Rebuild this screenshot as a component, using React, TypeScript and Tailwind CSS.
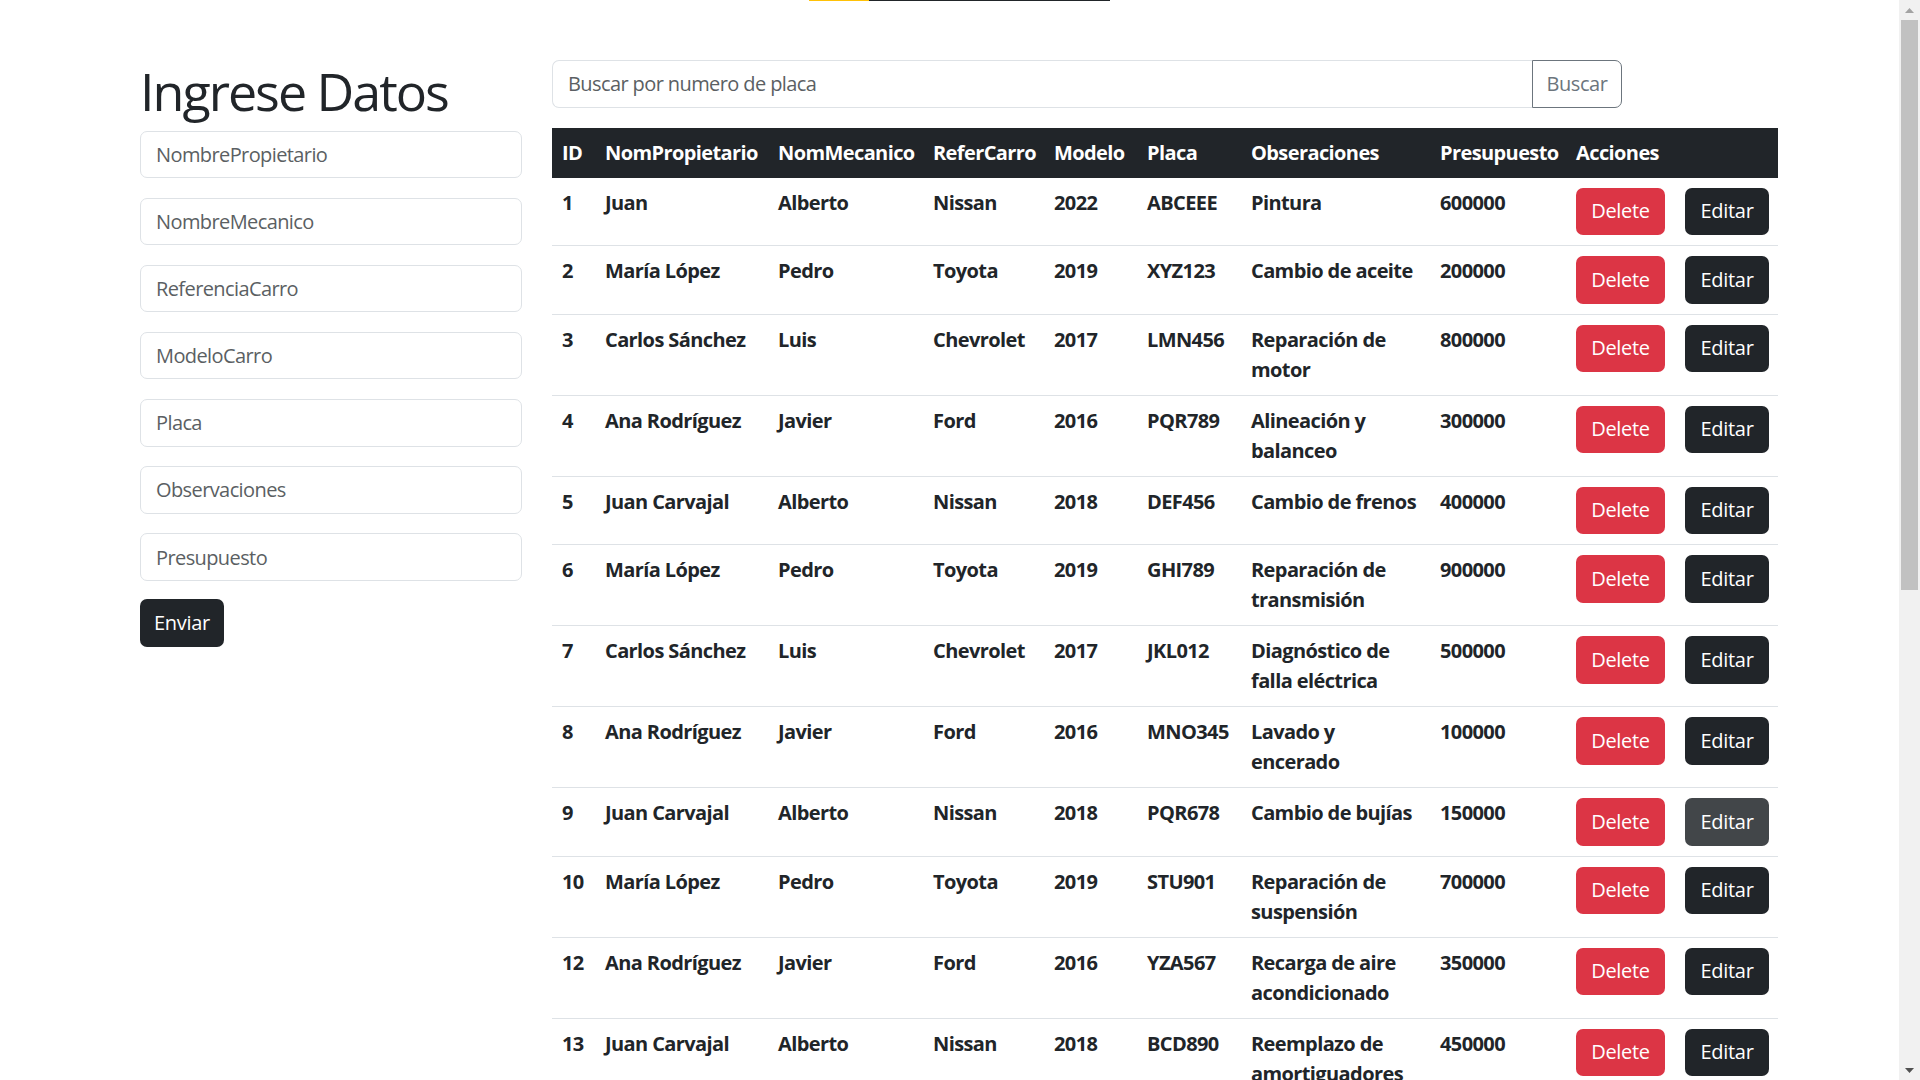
import React from "react";

type Row = {
  id: number;
  prop: string;
  mec: string;
  ref: string;
  modelo: string;
  placa: string;
  obs: string[];
  pres: string;
};

const rows: Row[] = [
  { id: 1, prop: "Juan", mec: "Alberto", ref: "Nissan", modelo: "2022", placa: "ABCEEE", obs: ["Pintura"], pres: "600000" },
  { id: 2, prop: "María López", mec: "Pedro", ref: "Toyota", modelo: "2019", placa: "XYZ123", obs: ["Cambio de aceite"], pres: "200000" },
  { id: 3, prop: "Carlos Sánchez", mec: "Luis", ref: "Chevrolet", modelo: "2017", placa: "LMN456", obs: ["Reparación de", "motor"], pres: "800000" },
  { id: 4, prop: "Ana Rodríguez", mec: "Javier", ref: "Ford", modelo: "2016", placa: "PQR789", obs: ["Alineación y", "balanceo"], pres: "300000" },
  { id: 5, prop: "Juan Carvajal", mec: "Alberto", ref: "Nissan", modelo: "2018", placa: "DEF456", obs: ["Cambio de frenos"], pres: "400000" },
  { id: 6, prop: "María López", mec: "Pedro", ref: "Toyota", modelo: "2019", placa: "GHI789", obs: ["Reparación de", "transmisión"], pres: "900000" },
  { id: 7, prop: "Carlos Sánchez", mec: "Luis", ref: "Chevrolet", modelo: "2017", placa: "JKL012", obs: ["Diagnóstico de", "falla eléctrica"], pres: "500000" },
  { id: 8, prop: "Ana Rodríguez", mec: "Javier", ref: "Ford", modelo: "2016", placa: "MNO345", obs: ["Lavado y", "encerado"], pres: "100000" },
  { id: 9, prop: "Juan Carvajal", mec: "Alberto", ref: "Nissan", modelo: "2018", placa: "PQR678", obs: ["Cambio de bujías"], pres: "150000" },
  { id: 10, prop: "María López", mec: "Pedro", ref: "Toyota", modelo: "2019", placa: "STU901", obs: ["Reparación de", "suspensión"], pres: "700000" },
  { id: 12, prop: "Ana Rodríguez", mec: "Javier", ref: "Ford", modelo: "2016", placa: "YZA567", obs: ["Recarga de aire", "acondicionado"], pres: "350000" },
  { id: 13, prop: "Juan Carvajal", mec: "Alberto", ref: "Nissan", modelo: "2018", placa: "BCD890", obs: ["Reemplazo de", "amortiguadores"], pres: "450000" },
];

const fields = [
  "NombrePropietario",
  "NombreMecanico",
  "ReferenciaCarro",
  "ModeloCarro",
  "Placa",
  "Observaciones",
  "Presupuesto",
];

const headers = [
  "ID",
  "NomPropietario",
  "NomMecanico",
  "ReferCarro",
  "Modelo",
  "Placa",
  "Obseraciones",
  "Presupuesto",
  "Acciones",
  "",
];

const colWidths = [43, 173, 155, 121, 93, 104, 189, 136, 109, 103];

export default function App() {
  return (
    <div className="flex h-screen overflow-hidden bg-white font-['Open_Sans',sans-serif] text-[#212529]">
      <div className="flex min-w-0 flex-1 flex-col">
        <div className="flex h-px shrink-0">
          <div className="ml-[809px] w-[60px] bg-[#ffc107]" />
          <div className="w-[241px] bg-[#212529]" />
        </div>
        <div className="flex gap-[30px] pl-[140px] pt-[59px]">
          {/* Left column */}
          <div className="flex w-[382px] shrink-0 flex-col">
            <h1 className="mb-[10px] h-[60.5px] text-[52px] font-medium leading-[61px] tracking-[-2px] whitespace-nowrap">
              Ingrese Datos
            </h1>
            {fields.map((f) => (
              <input
                key={f}
                placeholder={f}
                className="mb-[19.65px] h-[47.5px] w-full rounded-[7px] border border-[#dee2e6] bg-white px-[15px] text-[20px] tracking-[-0.6px] outline-none placeholder:text-[#5b5f63]"
              />
            ))}
            <button className="mt-[-1px] h-[47.5px] w-[84px] rounded-[7px] bg-[#212529] text-[20px] tracking-[-0.3px] text-white">
              Enviar
            </button>
          </div>

          {/* Right column */}
          <div className="flex w-[1226px] shrink-0 flex-col">
            <div className="mb-[20px] flex h-[47.5px] w-[1070px]">
              <input
                placeholder="Buscar por numero de placa"
                className="h-full flex-1 rounded-l-[7px] border border-r-0 border-[#dee2e6] bg-white px-[15px] text-[20px] tracking-[-0.6px] outline-none placeholder:text-[#5b5f63]"
              />
              <button className="h-full w-[90px] rounded-r-[7px] border border-[#6c757d] bg-white text-[20px] tracking-[-0.4px] text-[#6c757d]">
                Buscar
              </button>
            </div>

            <table className="w-[1226px] table-fixed border-collapse text-[20px] leading-[30px]">
              <colgroup>
                {colWidths.map((w, i) => (
                  <col key={i} style={{ width: w }} />
                ))}
              </colgroup>
              <thead>
                <tr className="bg-[#212529] text-white">
                  {headers.map((h, i) => (
                    <th key={i} className="px-[10px] py-[10px] text-left font-bold tracking-[-0.6px] whitespace-nowrap">
                      {h}
                    </th>
                  ))}
                </tr>
              </thead>
              <tbody>
                {rows.map((r) => (
                  <tr key={r.id} className="border-b border-[#dee2e6] align-top font-bold tracking-[-0.6px]">
                    <td className="p-[10px] whitespace-nowrap">{r.id}</td>
                    <td className="p-[10px] whitespace-nowrap">{r.prop}</td>
                    <td className="p-[10px] whitespace-nowrap">{r.mec}</td>
                    <td className="p-[10px] whitespace-nowrap">{r.ref}</td>
                    <td className="p-[10px] whitespace-nowrap">{r.modelo}</td>
                    <td className="p-[10px] whitespace-nowrap">{r.placa}</td>
                    <td className="p-[10px] whitespace-nowrap">
                      {r.obs.map((l, i) => (
                        <div key={i}>{l}</div>
                      ))}
                    </td>
                    <td className="p-[10px] whitespace-nowrap">{r.pres}</td>
                    <td className="p-[10px]">
                      <button className="block h-[47.5px] w-[89px] rounded-[7px] bg-[#dc3545] text-[20px] font-normal tracking-[-0.3px] text-white">
                        Delete
                      </button>
                    </td>
                    <td className="p-[10px]">
                      <button
                        className={
                          r.id === 9
                            ? "block h-[47.5px] w-[84px] rounded-[7px] bg-[#424649] text-[20px] font-normal tracking-[-0.3px] text-white"
                            : "block h-[47.5px] w-[84px] rounded-[7px] bg-[#212529] text-[20px] font-normal tracking-[-0.3px] text-white"
                        }
                      >
                        Editar
                      </button>
                    </td>
                  </tr>
                ))}
              </tbody>
            </table>
          </div>
        </div>
      </div>

      {/* Scrollbar */}
      <div className="flex w-[21px] shrink-0 flex-col items-center bg-[#f1f1f1]">
        <div className="flex h-[20px] w-full items-center justify-center">
          <svg width="9" height="5" viewBox="0 0 9 5">
            <path d="M4.5 0 L9 5 L0 5 Z" fill="#a3a3a3" />
          </svg>
        </div>
        <div className="h-[570px] w-[17px] bg-[#c1c1c1]" />
        <div className="flex-1" />
        <div className="flex h-[20px] w-full items-center justify-center">
          <svg width="9" height="5" viewBox="0 0 9 5">
            <path d="M0 0 L9 0 L4.5 5 Z" fill="#505050" />
          </svg>
        </div>
      </div>
    </div>
  );
}
